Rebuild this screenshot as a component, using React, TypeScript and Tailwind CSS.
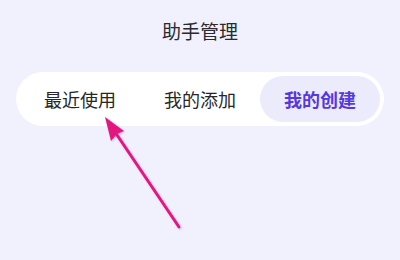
const tabs = ['最近使用', '我的添加', '我的创建']

export default function App() {
  const active = 2

  return (
    <div
      className="relative h-[260px] w-[400px] overflow-hidden bg-[#f1f0fd]"
      style={{ fontFamily: '"Noto Sans CJK SC", "Noto Sans", sans-serif' }}
    >
      <h1 className="pt-[17px] text-center text-[19px] leading-[28px] text-[#2a2a2e]">助手管理</h1>

      <div className="mx-[16px] mt-[27px] flex h-[54px] rounded-full bg-white p-[4px]">
        {tabs.map((t, i) => (
          <div
            key={t}
            className={
              i === active
                ? 'flex flex-1 items-center justify-center rounded-full bg-[#ecebfb] text-[18px] font-bold text-[#5637e0]'
                : 'flex flex-1 items-center justify-center rounded-full text-[18px] text-[#26262a]'
            }
          >
            {t}
          </div>
        ))}
      </div>

      {/* annotation arrow */}
      <svg className="absolute left-0 top-0" width="400" height="260" viewBox="0 0 400 260">
        <defs>
          <filter id="sh" x="-20%" y="-20%" width="140%" height="140%">
            <feDropShadow dx="1" dy="1" stdDeviation="1" floodColor="#7a5a9a" floodOpacity="0.35" />
          </filter>
        </defs>
        <g filter="url(#sh)">
          <line x1="115" y1="132" x2="179" y2="227" stroke="#e5147f" strokeWidth="3" strokeLinecap="round" />
          <polygon points="105,117 124,131 117,134 111,141" fill="#e5147f" />
        </g>
      </svg>
    </div>
  )
}
